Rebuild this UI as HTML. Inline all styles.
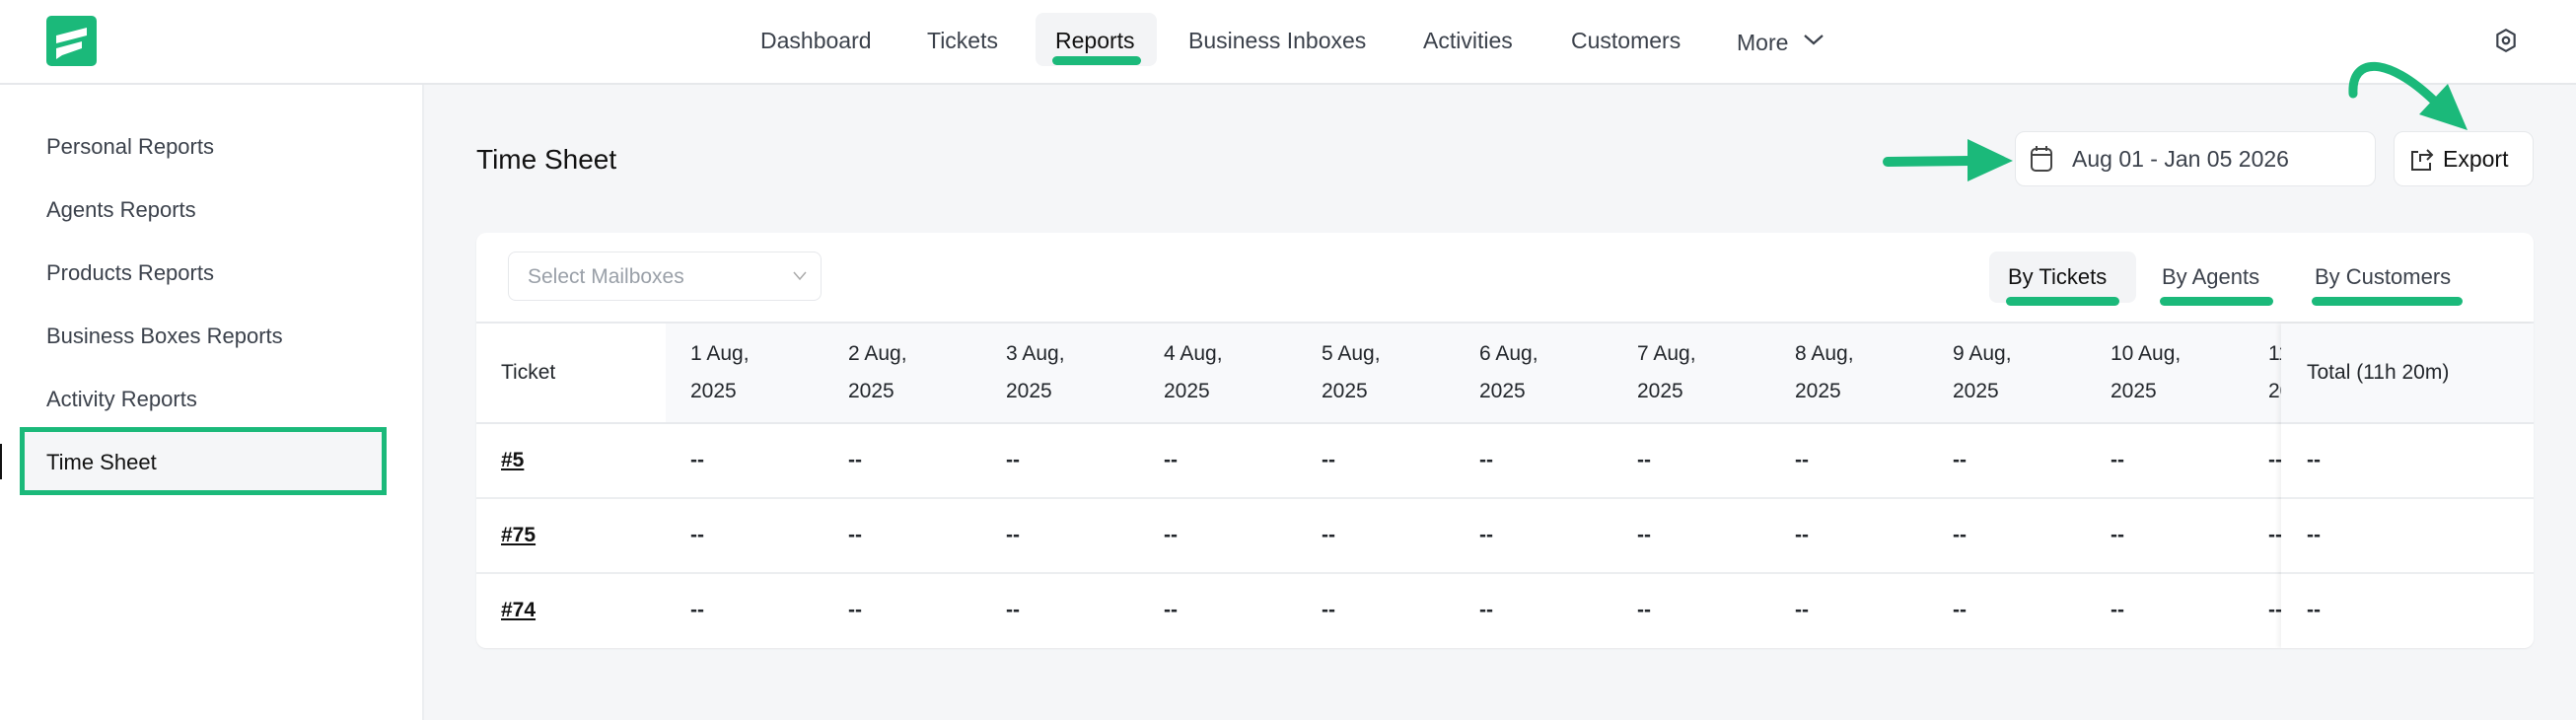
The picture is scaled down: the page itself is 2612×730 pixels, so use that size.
<!DOCTYPE html>
<html><head><meta charset="utf-8"><style>
*{box-sizing:border-box;margin:0;padding:0}
body{width:2612px;height:730px;overflow:hidden;background:#f5f6f8;font-family:"Liberation Sans",sans-serif;color:#1f2328;position:relative}
.abs{position:absolute}
.hdr{left:0;top:0;width:2612px;height:86px;background:#fff;border-bottom:2px solid #e6e8eb}
.nav{top:28px;font-size:23px;color:#3b414b;white-space:nowrap}
.side{left:0;top:86px;width:430px;height:644px;background:#fff;border-right:2px solid #eceef1}
.si{left:47px;font-size:22px;color:#3b414b}
.card{left:483px;top:236px;width:2086px;height:421px;background:#fff;border-radius:10px;box-shadow:0 1px 2px rgba(0,0,0,.06);overflow:hidden}
.th{font-size:21px;color:#22262b;line-height:38px}
.dash{font-size:21px;color:#22262b;font-weight:bold}
.tk{font-size:21px;font-weight:bold;text-decoration:underline;color:#111}
.btn{background:#fff;border:1.5px solid #e6e8eb;border-radius:10px}
.ul{height:9px;background:#1bb97a;border-radius:5px}
</style></head><body>
<div class="abs hdr"></div>
<div class="abs" style="left:47px;top:16px;width:51px;height:51px;background:#1bb97a;border-radius:5px"></div>
<svg class="abs" style="left:47px;top:16px" width="51" height="51"><path d="M10 20 L41 12 L41 20 L10 28Z M10 33 L36 26 L36 33 L16 40 L10 44Z" fill="#fff"/></svg>
<div class="abs" style="left:1050px;top:13px;width:123px;height:54px;background:#f3f4f6;border-radius:8px"></div>
<div class="abs ul" style="left:1067px;top:57px;width:90px"></div>
<div class="abs nav" style="left:771px">Dashboard</div>
<div class="abs nav" style="left:940px">Tickets</div>
<div class="abs nav" style="left:1070px;color:#111">Reports</div>
<div class="abs nav" style="left:1205px">Business Inboxes</div>
<div class="abs nav" style="left:1443px">Activities</div>
<div class="abs nav" style="left:1593px">Customers</div>
<div class="abs nav" style="left:1761px;top:30px">More</div>
<svg class="abs" style="left:1828px;top:33px" width="22" height="14"><path d="M2 3 L11 11 L20 3" stroke="#3b414b" stroke-width="2.2" fill="none"/></svg>
<svg class="abs" style="left:2528px;top:27px" width="26" height="28" viewBox="0 0 24 24"><path d="M12 2 L20 6.5 V17.5 L12 22 L4 17.5 V6.5Z" stroke="#3b414b" stroke-width="2" fill="none" stroke-linejoin="round"/><circle cx="12" cy="12" r="3" stroke="#3b414b" stroke-width="2" fill="none"/></svg>

<div class="abs side"></div>
<div class="abs si" style="top:136px">Personal Reports</div>
<div class="abs si" style="top:200px">Agents Reports</div>
<div class="abs si" style="top:264px">Products Reports</div>
<div class="abs si" style="top:328px">Business Boxes Reports</div>
<div class="abs si" style="top:392px">Activity Reports</div>
<div class="abs" style="left:20px;top:433px;width:372px;height:69px;border:5px solid #1bb97a;background:#f5f6f8"></div>
<div class="abs si" style="top:456px;color:#111">Time Sheet</div>
<div class="abs" style="left:0;top:450px;width:2px;height:36px;background:#111"></div>

<div class="abs" style="left:483px;top:146px;font-size:28px;color:#111">Time Sheet</div>
<div class="abs btn" style="left:2043px;top:133px;width:366px;height:56px"></div>
<svg class="abs" style="left:2058px;top:146px" width="24" height="30"><rect x="2" y="5" width="20" height="22" rx="4" stroke="#444" stroke-width="2" fill="none"/><path d="M2 11 H22 M7 2 V7 M17 2 V7" stroke="#444" stroke-width="2"/></svg>
<div class="abs" style="left:2101px;top:148px;font-size:23px;color:#3b414b">Aug 01 - Jan 05 2026</div>
<div class="abs btn" style="left:2427px;top:133px;width:142px;height:56px"></div>
<svg class="abs" style="left:2443px;top:147px" width="26" height="28"><path d="M9 7 H3 V25 H21 V18 M11 17 V10 H22 M18 5 L23 10 L18 15" stroke="#333" stroke-width="2" fill="none"/></svg>
<div class="abs" style="left:2477px;top:148px;font-size:23px;color:#111">Export</div>
<svg class="abs" style="left:1900px;top:50px" width="620" height="150">
<path d="M14 114 L98 113" stroke="#1bb97a" stroke-width="10" stroke-linecap="round"/>
<path d="M95 91 L141 113 L95 134Z" fill="#1bb97a"/>
<path d="M486 45 C484 8 520 6 568 52" stroke="#1bb97a" stroke-width="9" fill="none" stroke-linecap="round"/>
<path d="M553 66 L582 35 L602 82Z" fill="#1bb97a"/>
</svg>

<div class="abs card">
  <div class="abs btn" style="left:32px;top:19px;width:318px;height:50px;border-radius:8px"></div>
  <div class="abs" style="left:52px;top:33px;font-size:21px;color:#9aa0a8">Select Mailboxes</div>
  <svg class="abs" style="left:320px;top:38px" width="16" height="12"><path d="M2 2 L8 9 L14 2" stroke="#aaa" stroke-width="1.5" fill="none"/></svg>
  <div class="abs" style="left:1534px;top:19px;width:149px;height:52px;background:#f3f4f6;border-radius:8px"></div>
  <div class="abs" style="left:1553px;top:32px;font-size:22px;color:#111">By Tickets</div>
  <div class="abs" style="left:1709px;top:32px;font-size:22px;color:#3b414b">By Agents</div>
  <div class="abs" style="left:1864px;top:32px;font-size:22px;color:#3b414b">By Customers</div>
  <div class="abs ul" style="left:1551px;top:65px;width:115px"></div>
  <div class="abs ul" style="left:1707px;top:65px;width:115px"></div>
  <div class="abs ul" style="left:1861px;top:65px;width:153px"></div>
  <div class="abs" style="left:0;top:90px;width:2086px;height:2px;background:#e8eaed"></div>
  <div class="abs" style="left:192px;top:92px;width:1894px;height:100px;background:#f8f9fb"></div>
  <div class="abs" style="left:0;top:192px;width:2086px;height:2px;background:#e8eaed"></div>
  <div class="abs" style="left:0;top:268px;width:2086px;height:2px;background:#eceef0"></div>
  <div class="abs" style="left:0;top:344px;width:2086px;height:2px;background:#eceef0"></div>
  <div class="abs th" style="left:25px;top:123px">Ticket</div>
  <div class="abs th" style="left:217px;top:104px">1 Aug,<br>2025</div>
  <div class="abs th" style="left:377px;top:104px">2 Aug,<br>2025</div>
  <div class="abs th" style="left:537px;top:104px">3 Aug,<br>2025</div>
  <div class="abs th" style="left:697px;top:104px">4 Aug,<br>2025</div>
  <div class="abs th" style="left:857px;top:104px">5 Aug,<br>2025</div>
  <div class="abs th" style="left:1017px;top:104px">6 Aug,<br>2025</div>
  <div class="abs th" style="left:1177px;top:104px">7 Aug,<br>2025</div>
  <div class="abs th" style="left:1337px;top:104px">8 Aug,<br>2025</div>
  <div class="abs th" style="left:1497px;top:104px">9 Aug,<br>2025</div>
  <div class="abs th" style="left:1657px;top:104px">10 Aug,<br>2025</div>
  <div class="abs th" style="left:1817px;top:104px">11 Aug,<br>2025</div>
  <div class="abs tk" style="left:25px;top:219px">#5</div>
  <div class="abs tk" style="left:25px;top:295px">#75</div>
  <div class="abs tk" style="left:25px;top:371px">#74</div>
  <div class="abs dash" style="left:217px;top:193px;line-height:76px">--<br>--<br>--</div>
  <div class="abs dash" style="left:377px;top:193px;line-height:76px">--<br>--<br>--</div>
  <div class="abs dash" style="left:537px;top:193px;line-height:76px">--<br>--<br>--</div>
  <div class="abs dash" style="left:697px;top:193px;line-height:76px">--<br>--<br>--</div>
  <div class="abs dash" style="left:857px;top:193px;line-height:76px">--<br>--<br>--</div>
  <div class="abs dash" style="left:1017px;top:193px;line-height:76px">--<br>--<br>--</div>
  <div class="abs dash" style="left:1177px;top:193px;line-height:76px">--<br>--<br>--</div>
  <div class="abs dash" style="left:1337px;top:193px;line-height:76px">--<br>--<br>--</div>
  <div class="abs dash" style="left:1497px;top:193px;line-height:76px">--<br>--<br>--</div>
  <div class="abs dash" style="left:1657px;top:193px;line-height:76px">--<br>--<br>--</div>
  <div class="abs dash" style="left:1817px;top:193px;line-height:76px">--<br>--<br>--</div>
  <div class="abs" style="left:1830px;top:92px;width:256px;height:329px;background:#fff;box-shadow:-3px 0 4px rgba(0,0,0,.05)">
    <div class="abs" style="left:0;top:0;width:256px;height:100px;background:#f8f9fb"></div>
    <div class="abs" style="left:0;top:100px;width:256px;height:2px;background:#e8eaed"></div>
    <div class="abs" style="left:0;top:176px;width:256px;height:2px;background:#eceef0"></div>
    <div class="abs" style="left:0;top:252px;width:256px;height:2px;background:#eceef0"></div>
    <div class="abs th" style="left:26px;top:31px">Total (11h 20m)</div>
    <div class="abs dash" style="left:26px;top:101px;line-height:76px">--<br>--<br>--</div>
  </div>
</div>
</body></html>
